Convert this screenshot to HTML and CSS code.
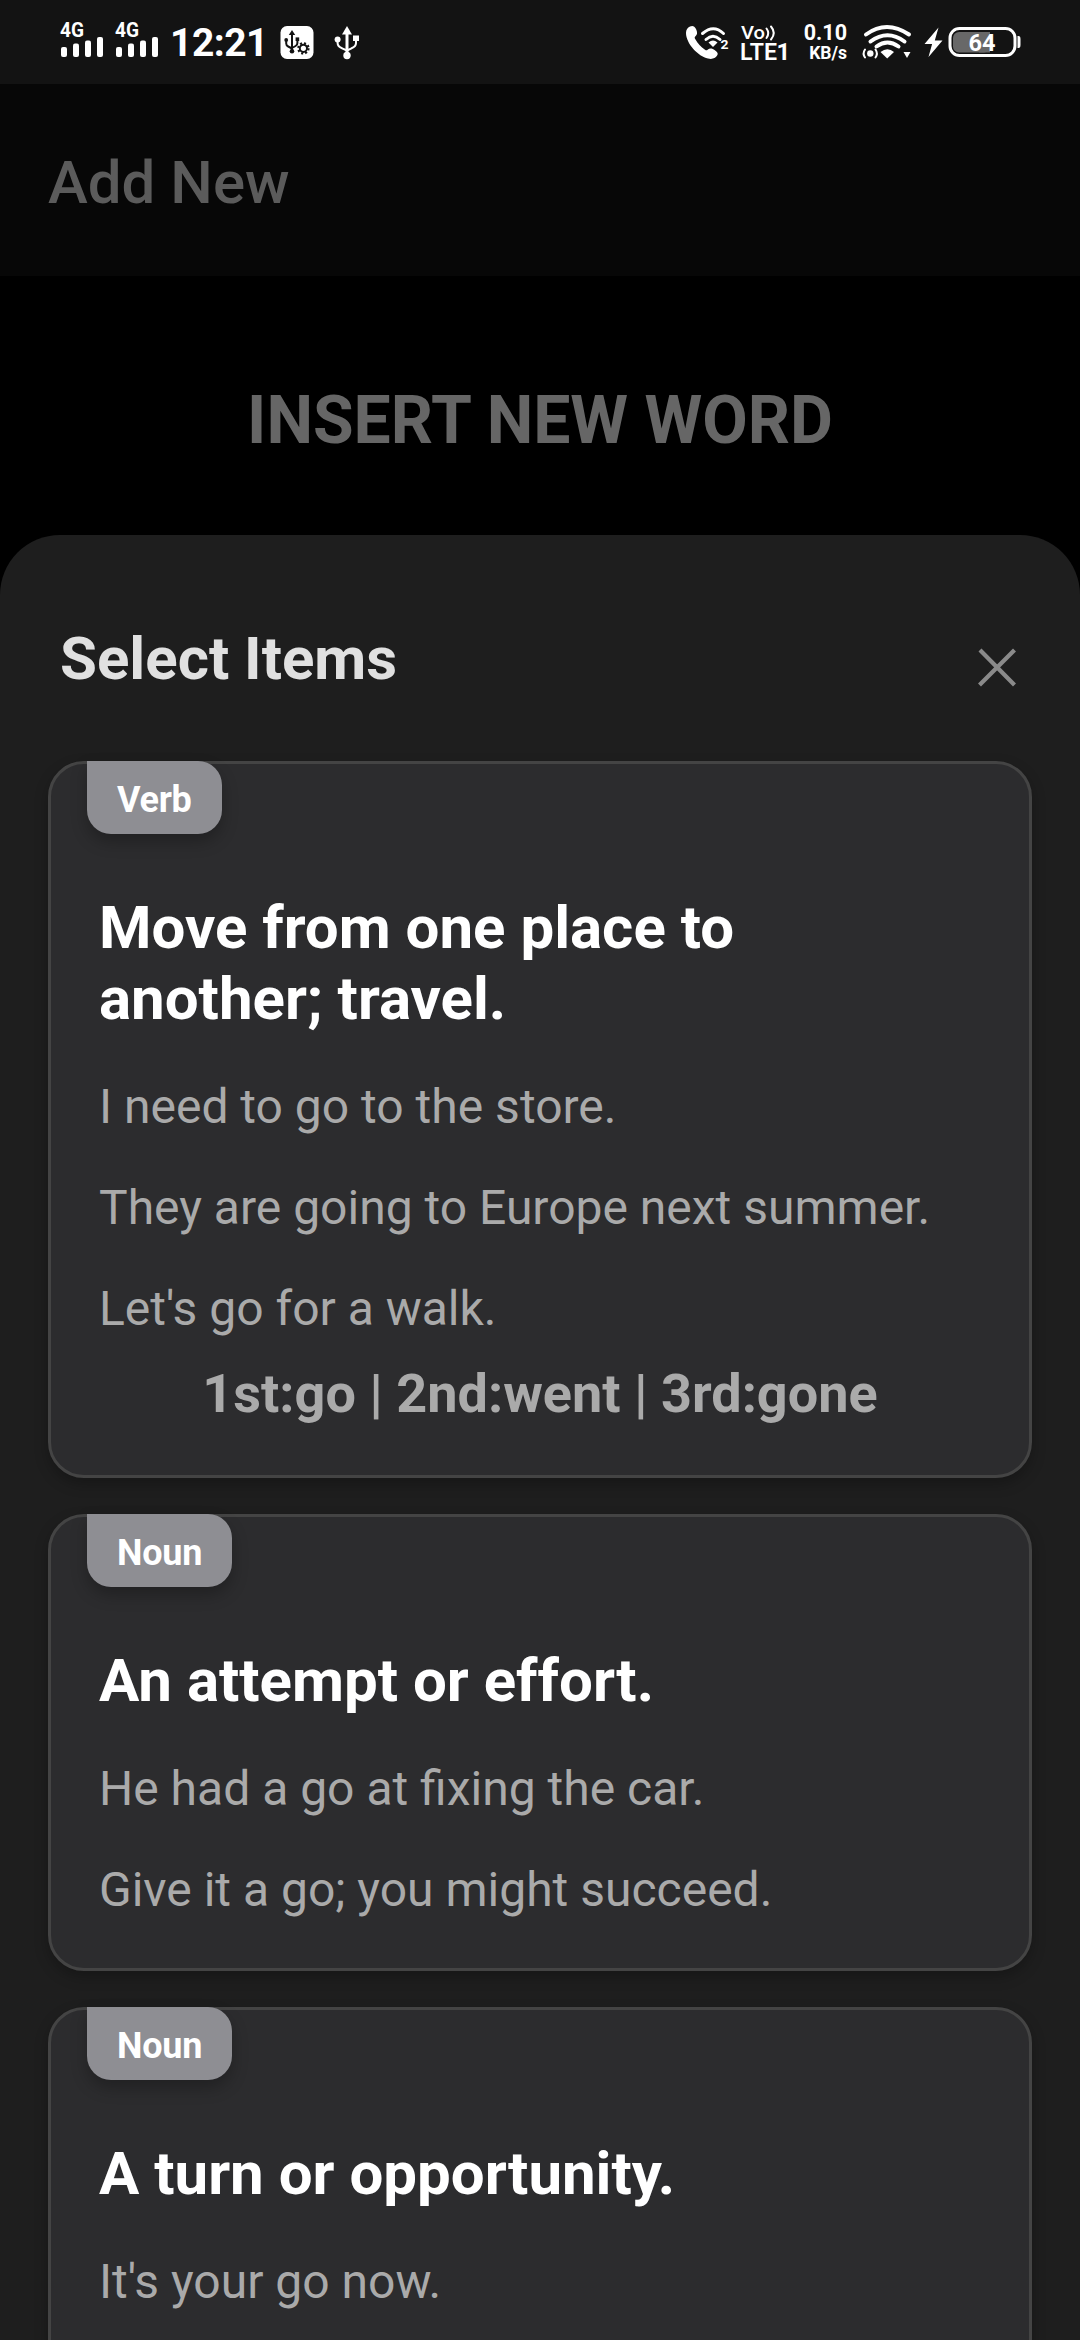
FILE: index.html
```html
<!DOCTYPE html>
<html lang="en">
<head>
<meta charset="utf-8">
<title>Add New</title>
<link rel="stylesheet" href="styles.css">
</head>
<body>
<div class="screen">
  <header class="status">
    <div class="status-left">
      <svg class="signal" width="44" height="60" viewBox="0 0 44 60">
        <text class="st-bold" x="0" y="36.5" font-size="20" textLength="24" lengthAdjust="spacingAndGlyphs">4G</text>
        <rect x="1" y="47" width="6" height="10" rx="2"/><rect x="13" y="43.5" width="6" height="13.5" rx="2"/><rect x="25" y="40.5" width="6" height="16.5" rx="2"/><rect x="37" y="37" width="6" height="20" rx="2"/>
      </svg>
      <svg class="signal" width="44" height="60" viewBox="0 0 44 60">
        <text class="st-bold" x="0" y="36.5" font-size="20" textLength="24" lengthAdjust="spacingAndGlyphs">4G</text>
        <rect x="1" y="47" width="6" height="10" rx="2"/><rect x="13" y="43.5" width="6" height="13.5" rx="2"/><rect x="25" y="40.5" width="6" height="16.5" rx="2"/><rect x="37" y="37" width="6" height="20" rx="2"/>
      </svg>
      <span class="clock">12:21</span>
      <svg class="usb-badge" width="34" height="60" viewBox="0 0 34 60">
        <rect x="0.5" y="26" width="33" height="33" rx="6.5"/>
        <g class="ink-dark">
          <path d="M12 30l-3.200 5h6.400z"/>
          <circle cx="12" cy="51.300" r="2.300"/><circle cx="6.200" cy="39.900" r="1.900"/><rect x="15.600" y="37.400" width="3.600" height="3.600"/>
          <path class="ink-line" d="M12 34v17M6.200 40v3.500q0 2 2 3l3.800 2M17.400 40v3q0 2-1.800 3l-3.600 2"/>
          <circle class="ink-line" cx="23.400" cy="48.300" r="3.600"/>
          <circle class="ink-teeth" cx="23.400" cy="48.300" r="5.100"/>
        </g>
      </svg>
      <svg class="usb" width="26" height="60" viewBox="0 0 26 60">
        <path d="M13 26l-5 8.500h10z"/>
        <circle cx="13" cy="55.500" r="3.700"/><circle cx="3.600" cy="39.500" r="3"/><rect x="19" y="35.500" width="6" height="5.500"/>
        <path class="stroke-2" d="M3.600 40v3q0 3.500 4.500 5.300L13 50.500M22 40v3q0 3.500-4.500 5.300L13 50.500"/>
        <path class="stroke-3" d="M13 33v21"/>
      </svg>
    </div>
    <div class="status-right">
      <svg class="call" width="44" height="60" viewBox="0 0 44 60">
        <path d="M4 26.500c2.500-1.300 4.600-.4 6 2.500 1.500 3.200 1.600 5.500-.5 7.200-1 .8-1 1.500-.3 2.800 2.600 4.600 5.600 7.800 9.800 10.800 1 .7 1.800.8 2.600 0 2.200-1.800 4.500-1.500 7.300.5 2.900 2 3.500 3.300 2.200 5.300-1.900 2.900-4.800 3.900-9.100 3C12.300 56.400 0 43.500 0 33c0-3.200 1.500-5.500 4-6.500z"/>
        <g class="stroke-3"><path d="M16.500 33.500q11-9.500 21 0"/><path d="M20 39.500q7-6.500 14 0"/></g>
        <path d="M22.500 42.500q4.500-4 9 0l-4.500 4.500z"/>
        <text class="st-bold" x="34.500" y="49" font-size="12" textLength="8" lengthAdjust="spacingAndGlyphs">2</text>
      </svg>
      <svg class="volte" width="48" height="62" viewBox="0 0 48 62">
        <text class="st-med" x="0" y="39" font-size="18.500" textLength="24" lengthAdjust="spacingAndGlyphs">Vo</text>
        <path class="stroke-2" d="M25.500 28.500q3.500 4.700 0 9.500M30 26.500q5.500 6.500 0 13"/>
        <text class="st-semi" x="-1" y="60" font-size="24" textLength="37" lengthAdjust="spacingAndGlyphs">LTE</text>
        <text class="st-bold" x="35.500" y="60" font-size="24">1</text>
      </svg>
      <div class="speed"><span class="speed-value">0.10</span><span class="speed-unit">KB/s</span></div>
      <svg class="wifi" width="50" height="60" viewBox="0 0 50 60">
        <g class="stroke-4"><path d="M4 34.500q20.500-15 43 0"/><path d="M8.500 41.500q17-12.500 34 0"/><path d="M14.500 46.500q11-8 22 0"/></g>
        <path d="M18.500 52q7-5.500 13.500 0l-6.800 6.500z"/>
        <circle cx="8.300" cy="53.500" r="3.200"/>
        <path class="stroke-2" d="M3 49.500q-2.800 4 0 8M13.500 49.500q2.800 4 0 8"/>
        <path d="M41.500 52h7l-3.500 6z"/>
      </svg>
      <svg class="battery" width="97" height="60" viewBox="0 0 97 60">
        <path d="M14.500 27.500L.5 44h7.600L4.500 57 18.500 40.500h-7.700z"/>
        <rect x="29" y="32" width="37" height="20.500" rx="6" fill="#686868"/><rect x="55" y="32" width="11" height="20.500" fill="#686868"/>
        <rect class="stroke-3" x="26" y="28.500" width="65" height="27" rx="9.500"/>
        <path d="M93.500 36h1q2 0 2 3v6q0 3-2 3h-1z"/>
        <text class="st-bold" x="44.500" y="50.500" font-size="24" textLength="27" lengthAdjust="spacingAndGlyphs">64</text>
      </svg>
    </div>
  </header>
  <div class="toolbar">Add New</div>
  <h1 class="page-title">INSERT NEW WORD</h1>
  <main class="sheet">
    <div class="sheet-head">
      <h2 class="sheet-title">Select Items</h2>
      <svg class="close" width="40" height="40" viewBox="0 0 40 40"><path d="M3 3l34.500 35M37.500 3L2.500 38"/></svg>
    </div>
    <div class="cards">
      <article class="card">
        <span class="badge">Verb</span>
        <h3 class="meaning">Move from one place to another; travel.</h3>
        <ul class="examples">
          <li>I need to go to the store.</li>
          <li>They are going to Europe next summer.</li>
          <li>Let's go for a walk.</li>
        </ul>
        <p class="forms">1st:go | 2nd:went | 3rd:gone</p>
      </article>
      <article class="card">
        <span class="badge">Noun</span>
        <h3 class="meaning">An attempt or effort.</h3>
        <ul class="examples">
          <li>He had a go at fixing the car.</li>
          <li>Give it a go; you might succeed.</li>
        </ul>
      </article>
      <article class="card card-tall">
        <span class="badge">Noun</span>
        <h3 class="meaning">A turn or opportunity.</h3>
        <ul class="examples">
          <li>It's your go now.</li>
        </ul>
      </article>
    </div>
  </main>
</div>
</body>
</html>
```
FILE: styles.css
```css
* { box-sizing: border-box; margin: 0; padding: 0; }
body { background: #000; font-family: Roboto, sans-serif; }
.screen { width: 1080px; height: 2340px; overflow: hidden; display: flex; flex-direction: column; }

.status { height: 84px; flex: none; display: flex; justify-content: space-between; padding: 0 59px 0 60px; background: #131313; color: #fff; }
.status svg { fill: #fff; display: block; flex: none; overflow: visible; }
.status-left, .status-right { display: flex; align-items: flex-start; }
.signal { margin-right: 11px; }
.clock { width: 97px; padding-top: 20px; font-size: 39px; line-height: 46px; font-weight: 700; letter-spacing: -0.5px; white-space: nowrap; }
.usb-badge { margin-left: 13px; }
.usb { margin-left: 20px; }
.call { margin-right: 11px; }
.volte { margin-right: 14px; }
.speed { width: 44px; padding-top: 21px; display: flex; flex-direction: column; align-items: flex-end; font-weight: 700; white-space: nowrap; }
.speed-value { font-size: 21.5px; line-height: 24px; }
.speed-unit { font-size: 17.5px; line-height: 20px; margin-top: -2px; }
.wifi { margin-left: 15px; }
.battery { margin-left: 12px; }
.status .ink-dark { fill: #131313; }
.ink-line { fill: none; stroke: #131313; stroke-width: 2; }
.ink-teeth { fill: none; stroke: #131313; stroke-width: 2.2; stroke-dasharray: 2 2.005; }
.st-bold { font-weight: 700; }
.st-semi { font-weight: 600; }
.st-med { font-weight: 500; }
.stroke-2, .stroke-3, .stroke-4 { fill: none; stroke: #fff; stroke-linecap: round; }
.stroke-2 { stroke-width: 2; }
.stroke-3 { stroke-width: 3; }
.stroke-4 { stroke-width: 4; }

.toolbar { height: 192px; flex: none; padding: 63px 48px 0; background: #070707; color: #5b5b5b; font-size: 60px; line-height: 71px; font-weight: 500; }
.page-title { height: 259px; flex: none; padding-top: 106px; text-align: center; color: #666; font-size: 66px; line-height: 78px; font-weight: 700; }

.sheet { flex: 1 0 auto; background: #1e1e1e; border-radius: 60px 60px 0 0; }
.sheet-head { height: 226px; display: flex; justify-content: space-between; padding: 88px 63px 0 60px; }
.sheet-title { color: #e0e0e0; font-size: 60px; line-height: 71px; font-weight: 700; }
.close { margin-top: 24px; fill: none; stroke: #8a8a8a; stroke-width: 4.2; }

.cards { display: flex; flex-direction: column; gap: 36px; padding: 0 48px; }
.card { position: relative; padding: 128px 48px 50px; background: #2c2c2e; border: 3px solid #444; border-radius: 36px; box-shadow: 0 6px 14px rgba(0, 0, 0, .25); }
.card-tall { min-height: 458px; }
.badge { position: absolute; left: 36px; top: -3px; height: 73px; padding: 0 30px; border-radius: 0 24px 24px 24px; background: #8e8e93; color: #fff; font-size: 36px; line-height: 78px; font-weight: 700; letter-spacing: -0.25px; box-shadow: 0 8px 16px rgba(0, 0, 0, .25); }
.meaning { color: #fff; font-size: 60px; line-height: 71px; font-weight: 700; max-width: 760px; }
.examples { list-style: none; margin-top: 44px; display: flex; flex-direction: column; gap: 44px; }
.examples li { color: #aaa; font-size: 48px; line-height: 57px; }
.forms { margin-top: 25px; margin-bottom: -1px; text-align: center; color: #aaa; font-size: 54px; line-height: 64px; font-weight: 700; }
```
